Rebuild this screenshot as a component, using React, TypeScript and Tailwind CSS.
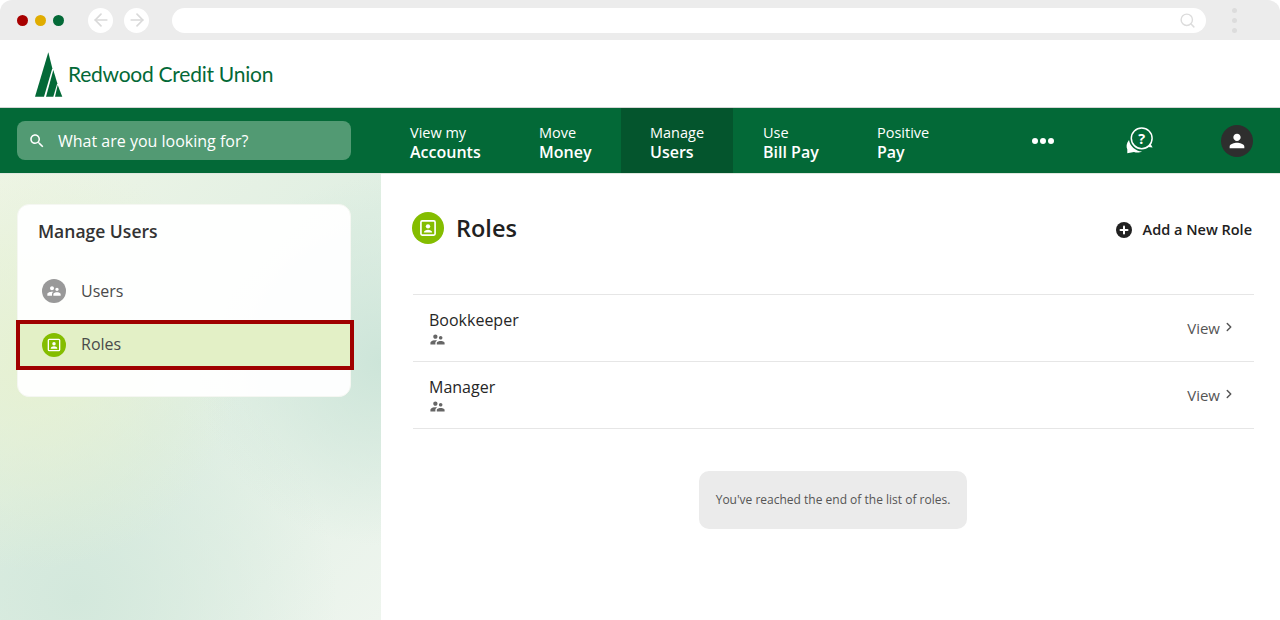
import { ArrowLeft, ArrowRight, ChevronRight, Plus, Search } from "lucide-react";

const navItems = [
  { top: "View my", bottom: "Accounts", width: "w-[130px] pl-[30px]" },
  { top: "Move", bottom: "Money", width: "w-[111px] pl-[29px]" },
  { top: "Manage", bottom: "Users", width: "w-[112px] pl-[29px]", active: true },
  { top: "Use", bottom: "Bill Pay", width: "w-[114px] pl-[30px]" },
  { top: "Positive", bottom: "Pay", width: "w-[125px] pl-[30px]" },
];

const roles = ["Bookkeeper", "Manager"];

function PeopleIcon({ className }: { className: string }) {
  return (
    <svg viewBox="0 0 24 24" className={className} fill="currentColor">
      <path d="M16.5 12c1.38 0 2.49-1.12 2.49-2.5S17.88 7 16.5 7C15.12 7 14 8.12 14 9.5s1.12 2.5 2.5 2.5zM9 11c1.66 0 3-1.34 3-3S10.66 5 9 5 6 6.34 6 8s1.34 3 3 3zm7.5 3c-1.83 0-5.5.92-5.5 2.75V19h11v-2.25c0-1.83-3.67-2.75-5.5-2.75zM9 13c-2.33 0-7 1.17-7 3.5V19h7v-2.25c0-.85.33-2.34 2.37-3.47C10.5 13.1 9.66 13 9 13z" />
    </svg>
  );
}

function RoleIcon({ className }: { className: string }) {
  return (
    <svg viewBox="0 0 24 24" className={className} fill="none">
      <rect x="3.5" y="3.5" width="17" height="17" rx="1.5" stroke="currentColor" strokeWidth="2" />
      <circle cx="12" cy="10" r="2.6" fill="currentColor" />
      <path d="M7 17.5c0-2.4 3-3.5 5-3.5s5 1.1 5 3.5z" fill="currentColor" />
    </svg>
  );
}

function ChatHelpIcon() {
  return (
    <svg viewBox="0 0 28 28" className="h-[28px] w-[28px] text-white">
      <path d="M3 13C.3 16.5 0 19.5 1.3 22.5L1.3 26.3 8 25c3 1 6 .5 8-.5C9.5 24 4 19.5 3 13z" fill="currentColor" />
      <circle cx="15.7" cy="11.3" r="10.4" fill="none" stroke="currentColor" strokeWidth="1.5" />
      <path d="M22 20l4.6.6-2-3.6z" fill="currentColor" />
      <text x="15.7" y="16.5" textAnchor="middle" fontSize="14.5" fontWeight="700" fill="currentColor" fontFamily="'Open Sans', sans-serif">?</text>
    </svg>
  );
}

function TreeLogo() {
  return (
    <svg viewBox="0 0 28 45" className="h-[45px] w-[28px] text-[#036937]" fill="currentColor">
      <polygon points="13.3,0.3 17.3,16.3 9,44.7 0,44.7" />
      <polygon points="18.3,18 22.3,31.3 18.3,44.7 11,44.7" />
      <polygon points="22.7,33 27.3,44.7 20,44.7" />
    </svg>
  );
}

export default function App() {
  return (
    <div className="flex h-[620px] w-[1280px] flex-col overflow-hidden bg-white font-['Open_Sans',sans-serif] text-[#212121]">
      {/* browser chrome */}
      <div className="flex h-10 shrink-0 items-center rounded-t-xl bg-[#ececec] pl-[17px] pr-[43px]">
        <div className="flex gap-[7px]">
          <span className="h-[11px] w-[11px] rounded-full bg-[#a80000]" />
          <span className="h-[11px] w-[11px] rounded-full bg-[#e0ac00]" />
          <span className="h-[11px] w-[11px] rounded-full bg-[#036937]" />
        </div>
        <div className="ml-6 flex gap-[11px]">
          <span className="flex h-[25px] w-[25px] items-center justify-center rounded-full bg-white text-[#d9d9d9]">
            <ArrowLeft className="h-5 w-5" />
          </span>
          <span className="flex h-[25px] w-[25px] items-center justify-center rounded-full bg-white text-[#d9d9d9]">
            <ArrowRight className="h-5 w-5" />
          </span>
        </div>
        <div className="ml-[23px] flex h-[25px] flex-1 items-center justify-end rounded-full bg-white pr-[10px]">
          <Search className="h-[17px] w-[17px] text-[#dcdcdc]" />
        </div>
        <div className="ml-[26px] flex flex-col gap-[5px]">
          <span className="h-[5px] w-[5px] rounded-full bg-[#dcdcdc]" />
          <span className="h-[5px] w-[5px] rounded-full bg-[#dcdcdc]" />
          <span className="h-[5px] w-[5px] rounded-full bg-[#dcdcdc]" />
        </div>
      </div>

      {/* logo */}
      <div className="flex h-[67px] shrink-0 items-start gap-[5px] bg-white pl-[35px] pt-[12px]">
        <TreeLogo />
        <span className="mt-[9px] font-['Lato',sans-serif] text-[21px] leading-[26px] tracking-[-0.25px] text-[#036937]">
          Redwood Credit Union
        </span>
      </div>

      {/* nav */}
      <div className="flex h-[67px] shrink-0 items-stretch border-y border-t-[#d5d5d5] border-b-[#dfe8df] bg-[#036937] pl-[17px] text-white">
        <div className="mt-[13px] flex h-[39px] w-[334px] items-center gap-3 rounded-lg bg-[#529a73] pl-[11px]">
          <svg viewBox="0 0 24 24" className="h-[18px] w-[18px]" fill="currentColor">
            <path d="M15.5 14h-.79l-.28-.27C15.41 12.59 16 11.11 16 9.5 16 5.91 13.09 3 9.5 3S3 5.91 3 9.5 5.91 16 9.5 16c1.61 0 3.09-.59 4.23-1.57l.27.28v.79l5 4.99L20.49 19l-4.99-5zm-6 0C7.01 14 5 11.99 5 9.5S7.01 5 9.5 5 14 7.01 14 9.5 11.99 14 9.5 14z" />
          </svg>
          <span className="text-base">What are you looking for?</span>
        </div>
        <div className="ml-[29px] flex">
          {navItems.map((item) => (
            <div
              key={item.bottom}
              className={`flex flex-col justify-center pt-[3px] ${item.width} ${item.active ? "bg-[#04552d]" : ""}`}
            >
              <span className="text-[14.5px] leading-[19px]">{item.top}</span>
              <span className="text-base font-semibold leading-[20px]">{item.bottom}</span>
            </div>
          ))}
        </div>
        <div className="flex w-[142px] items-center justify-center gap-[2px]">
          <span className="h-[6px] w-[6px] rounded-full bg-white" />
          <span className="h-[6px] w-[6px] rounded-full bg-white" />
          <span className="h-[6px] w-[6px] rounded-full bg-white" />
        </div>
        <div className="ml-[12px] flex items-center">
          <ChatHelpIcon />
        </div>
        <div className="ml-[67px] flex items-center">
          <span className="flex h-8 w-8 items-center justify-center rounded-full bg-[#2e2e2e] text-white">
            <svg viewBox="0 0 24 24" className="h-[22px] w-[22px]" fill="currentColor">
              <path d="M12 12c2.21 0 4-1.79 4-4s-1.79-4-4-4-4 1.79-4 4 1.79 4 4 4zm0 2c-2.67 0-8 1.34-8 4v2h16v-2c0-2.66-5.33-4-8-4z" />
            </svg>
          </span>
        </div>
      </div>

      {/* body */}
      <div className="flex min-h-0 flex-1">
        <aside className="w-[381px] shrink-0 bg-[radial-gradient(circle_at_100%_42%,#cde5d9_0%,transparent_40%),radial-gradient(circle_at_8%_42%,#e6f1d2_0%,transparent_48%),radial-gradient(circle_at_20%_95%,#d3e8dc_0%,transparent_50%),linear-gradient(135deg,#eef5e6_0%,#e0efe3_50%,#eef5ee_100%)] pl-[17px] pt-[30px]">
          <div className="h-[193px] w-[334px] rounded-xl border border-[#f5f7f2] bg-white/95 pt-[14px]">
            <h2 className="pl-[20px] text-[17.5px] font-semibold leading-6 text-[#333]">Manage Users</h2>
            <div className="mb-[2px] mt-[20px] flex h-[55px] items-center gap-[15px] pl-[24px]">
              <span className="flex h-6 w-6 items-center justify-center rounded-full bg-[#999] text-white">
                <PeopleIcon className="h-4 w-4" />
              </span>
              <span className="text-base text-[#4a4a4a]">Users</span>
            </div>
            <div className="-ml-[2px] -mr-[4px] flex h-[50px] items-center gap-[15px] border-4 border-[#a00000] bg-[#e3f0c6] pl-[22px]">
              <span className="flex h-6 w-6 items-center justify-center rounded-full bg-[#84bd00] text-white">
                <RoleIcon className="h-4 w-4" />
              </span>
              <span className="-mt-[2px] text-base text-[#4a4a4a]">Roles</span>
            </div>
          </div>
        </aside>

        <main className="min-w-0 flex-1 pl-[31px] pr-[26px] pt-[38px]">
          <div className="flex h-[32px] items-center justify-between">
            <div className="flex items-center gap-3">
              <span className="flex h-8 w-8 items-center justify-center rounded-full bg-[#84bd00] text-white">
                <RoleIcon className="h-5 w-5" />
              </span>
              <h1 className="pt-[1px] text-[23.5px] font-semibold text-[#212121]">Roles</h1>
            </div>
            <div className="flex items-center gap-[11px] pr-[2px] pt-[3px]">
              <span className="flex h-4 w-4 items-center justify-center rounded-full bg-[#212121] text-white">
                <Plus className="h-3 w-3" strokeWidth={4} />
              </span>
              <span className="text-[14.5px] font-semibold">Add a New Role</span>
            </div>
          </div>

          <div className="mt-[50px] ml-[1px] border-t border-[#e6e6e6]">
            {roles.map((role) => (
              <div key={role} className="flex h-[67px] items-center justify-between border-b border-[#e6e6e6] pl-4 pr-[18px]">
                <div>
                  <div className="text-base leading-[22px] text-[#262626]">{role}</div>
                  <PeopleIcon className="h-[17px] w-[17px] text-[#666]" />
                </div>
                <div className="flex items-center gap-[2px] text-[15px] text-[#555]">
                  View
                  <ChevronRight className="-mt-[3px] h-[14px] w-[14px]" strokeWidth={2.5} />
                </div>
              </div>
            ))}
          </div>

          <div className="mt-[42px] flex justify-center">
            <div className="flex h-[58px] w-[268px] items-center justify-center rounded-[10px] bg-[#ebebeb] text-xs text-[#555]">
              You've reached the end of the list of roles.
            </div>
          </div>
        </main>
      </div>
    </div>
  );
}
